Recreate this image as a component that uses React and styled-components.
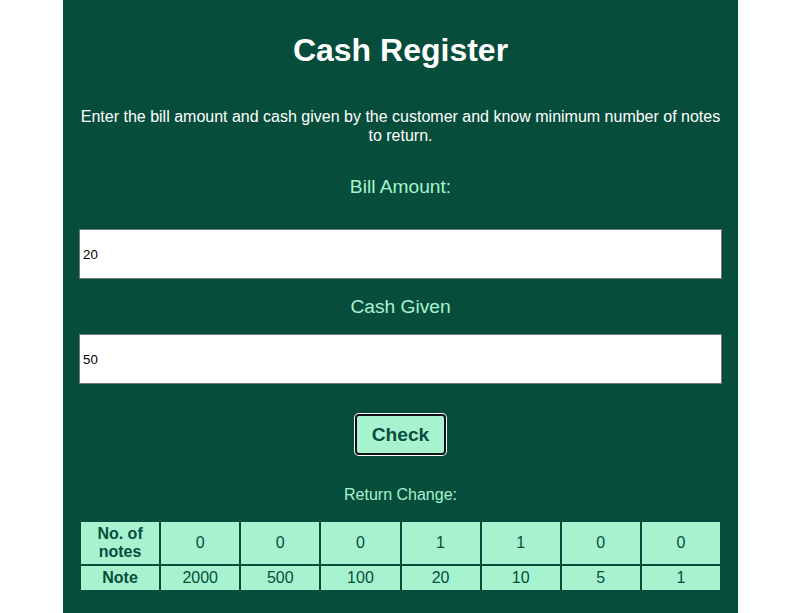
import styled, { createGlobalStyle } from 'styled-components';

const notes = [2000, 500, 100, 20, 10, 5, 1];
const counts = [0, 0, 0, 1, 1, 0, 0];

const GlobalStyle = createGlobalStyle`
  body {
    margin: 0;
    background: #ffffff;
    font-family: 'Liberation Sans', Arial, sans-serif;
  }
`;

const App = () => {
  return (
    <>
      <GlobalStyle />
      <St.Page>
        <St.Container>
          <St.Title>Cash Register</St.Title>
          <St.Description>
            Enter the bill amount and cash given by the customer and know minimum number of notes
            to return.
          </St.Description>
          <St.Label top="31">Bill Amount:</St.Label>
          <St.Input type="number" defaultValue="20" top="31" />
          <St.Label top="17">Cash Given</St.Label>
          <St.Input type="number" defaultValue="50" top="16" />
          <St.Button>Check</St.Button>
          <St.Caption>Return Change:</St.Caption>
          <St.Table>
            <tbody>
              <tr>
                <St.HeadCell>No. of notes</St.HeadCell>
                {counts.map((c, i) => (
                  <St.Cell key={i}>{c}</St.Cell>
                ))}
              </tr>
              <tr>
                <St.HeadCell>Note</St.HeadCell>
                {notes.map(n => (
                  <St.Cell key={n}>{n}</St.Cell>
                ))}
              </tr>
            </tbody>
          </St.Table>
        </St.Container>
      </St.Page>
    </>
  );
};

const St = {
  Page: styled.main`
    display: flex;
    padding-left: 63px;
  `,
  Container: styled.section`
    display: flex;
    flex-direction: column;
    align-items: center;

    width: 675px;
    min-height: 100vh;
    padding: 0 16px 20px;
    box-sizing: border-box;

    background: #064e3b;
  `,
  Title: styled.h1`
    margin: 32px 0 0;
    font-size: 32px;
    font-weight: 700;
    line-height: normal;
    color: #ffffff;
    text-align: center;
  `,
  Description: styled.p`
    margin: 38px 0 0;
    font-size: 16px;
    line-height: 19px;
    color: #ffffff;
    text-align: center;
  `,
  Label: styled.label`
    display: block;
    margin-top: ${props => props.top}px;
    font-size: 1.2rem;
    line-height: normal;
    color: #a7f3d0;
  `,
  Input: styled.input`
    width: 100%;
    height: 50px;
    margin-top: ${props => props.top}px;
    padding: 0 3px;
    box-sizing: border-box;
    border: 1px solid #767676;

    background: #ffffff;
    color: #000000;
    font-family: 'Liberation Sans', Arial, sans-serif;
    font-size: 13.33px;
    outline: none;

    &::-webkit-inner-spin-button,
    &::-webkit-outer-spin-button {
      -webkit-appearance: none;
      margin: 0;
    }
  `,
  Button: styled.button`
    margin-top: 30px;
    padding: 8px 15px 7px;
    border: 2px solid #111111;
    border-radius: 4px;
    box-shadow: 0 0 0 1px #ffffff;

    background: #a7f3d0;
    color: #064e3b;
    font-family: 'Liberation Sans', Arial, sans-serif;
    font-size: 1.2rem;
    font-weight: 700;
    line-height: normal;
    cursor: pointer;
  `,
  Caption: styled.p`
    margin: 31px 0 0;
    font-size: 16px;
    line-height: normal;
    color: #a7f3d0;
  `,
  Table: styled.table`
    width: 100%;
    margin-top: 16px;
    border-spacing: 2px;
    table-layout: fixed;
  `,
  HeadCell: styled.th`
    padding: 3px;
    background: #a7f3d0;
    color: #064e3b;
    font-size: 16px;
    font-weight: 700;
    text-align: center;
  `,
  Cell: styled.td`
    padding: 3px;
    background: #a7f3d0;
    color: #064e3b;
    font-size: 16px;
    text-align: center;
  `,
};

export default App;
